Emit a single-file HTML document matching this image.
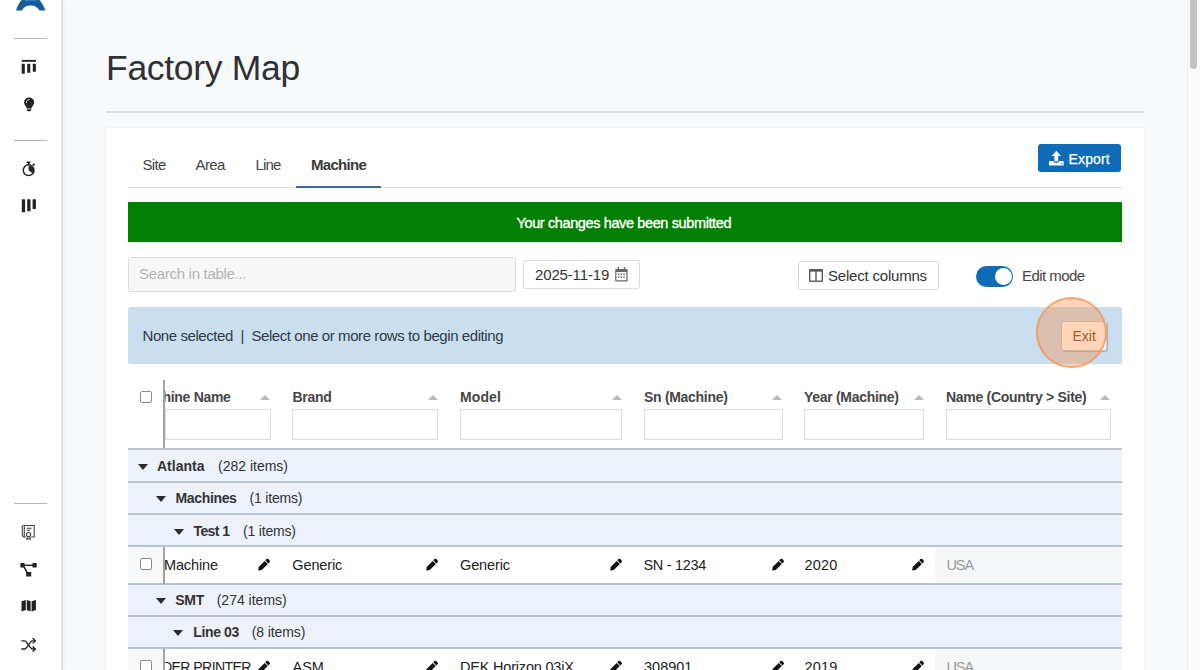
<!DOCTYPE html>
<html><head><meta charset="utf-8">
<style>
*{box-sizing:border-box;margin:0;padding:0}
html,body{width:1200px;height:670px;overflow:hidden;background:#f8f9fb;font-family:"Liberation Sans",sans-serif;color:#333;position:relative}
div{position:absolute}
.t{line-height:1;white-space:pre}
#side{left:0;top:0;width:63px;height:670px;background:#fff;border-right:2px solid #e3e3e4;box-shadow:2px 0 5px rgba(0,0,0,.035)}
.sdiv{left:14px;width:33px;height:1px;background:#b8b8b8}
svg{position:absolute;overflow:visible}
#scroll{left:1187px;top:0;width:13px;height:670px;background:#fafafa;border-left:1px solid #ededed}
#thumb{left:1190px;top:0;width:7px;height:69px;background:#c2c2c2;border-radius:0 0 4px 4px}
#hr{left:106px;top:110.5px;width:1038px;height:2.5px;background:#d9dadd}
#card{left:106px;top:128px;width:1038px;height:600px;background:#fff;border-radius:0;box-shadow:0 0 2px 1px rgba(0,0,0,.035)}
.tab{font-size:15px;color:#444;top:157px}
#tabline{left:128px;top:187px;width:994px;height:1px;background:#dee2e6}
#tabul{left:296px;top:186px;width:85px;height:2px;background:#3c6a9a}
#export{left:1038px;top:144px;width:83px;height:28px;background:#0d6cb5;border-radius:3px}
#green{left:128px;top:202px;width:994px;height:40px;background:#017f01}
#search{left:128px;top:257px;width:388px;height:35px;background:#f7f7f7;border:1px solid #dadada;border-radius:3px}
#date{left:523px;top:260px;width:117px;height:29px;background:#fff;border:1px solid #dadada;border-radius:3px}
#selcol{left:798px;top:261px;width:141px;height:29px;background:#fff;border:1px solid #dadada;border-radius:3px}
#toggle{left:976px;top:266px;width:37px;height:21px;background:#0d6cb5;border-radius:11px}
#knob{left:995px;top:268px;width:17px;height:17px;background:#fff;border-radius:50%}
#info{left:128px;top:307px;width:994px;height:57px;background:#c9dff0;border-radius:2px}
#exit{left:1061px;top:321px;width:46px;height:30px;background:#fff;border:1px solid #c8c8c8;border-radius:3px;box-shadow:1px 1px 1px rgba(0,0,0,.2)}
#circle{left:1036px;top:297px;width:71px;height:71px;border-radius:50%;background:rgba(255,130,45,.33);border:2.5px solid rgba(240,152,95,.8);box-shadow:0 0 1px rgba(240,150,90,.6)}
.hdr{font-size:14px;font-weight:bold;color:#464646;top:390px;letter-spacing:-0.3px}
.arr{width:0;height:0;border-left:5px solid transparent;border-right:5px solid transparent;border-bottom:5px solid #b9b9b9;top:395px}
.fin{top:409px;height:31px;background:#fff;border:1px solid #dcdcdc}
.rb{left:128px;width:994px;height:2px;background:#b7c5d2}
.grp{left:128px;width:994px;background:#edf1f9}
.tri{width:0;height:0;border-left:5px solid transparent;border-right:5px solid transparent;border-top:6px solid #2b2b2b}
.gn{font-size:14px;font-weight:bold;color:#333}
.gc{font-size:14px;color:#333}
.cell{font-size:14.5px;color:#222}
.cb{left:140px;width:12px;height:12px;border:1px solid #8a8a8a;border-radius:2px;background:#fff}
.vl{left:163px;width:2px;background:#a3a3a3}
</style></head><body>
<div id="side">
  <div class="sdiv" style="top:38px"></div>
  <div class="sdiv" style="top:140px"></div>
  <div class="sdiv" style="top:503px"></div>
</div>

<!-- logo -->
<svg style="left:0;top:0" width="62" height="20" viewBox="0 0 62 20"><path d="M16 10.5 L22 10.5 C24 6.5 27 5.5 30.5 5.5 C34 5.5 37 6.5 39.5 10.5 L45.5 10.5 C42 1 37 -4 30.5 -4 C24 -4 19 1 16 10.5 Z" fill="#175c98"/><path d="M24.5 -1.5 C27.5 -3.5 33.5 -3.5 36.5 -1.5 L35.5 1.8 C33 0.3 28 0.3 25.5 1.8Z" fill="#2687cf"/></svg>
<!-- icon1 -->
<svg style="left:0;top:0" width="62" height="670" viewBox="0 0 62 670">
<g fill="#222">
<rect x="21.7" y="59.9" width="14.2" height="1.9"/>
<rect x="21.7" y="63.8" width="3.1" height="10" rx="0.5"/>
<rect x="27.2" y="63.8" width="3.1" height="9" rx="0.5"/>
<rect x="32.8" y="63.8" width="3.1" height="7.9" rx="0.5"/>
<!-- bulb -->
<path d="M29.1 97.5 C26.2 97.5 24.1 99.7 24.1 102.4 C24.1 104.5 25.5 105.6 26.4 107.3 L26.6 108.6 L31.6 108.6 L31.8 107.3 C32.7 105.6 34.2 104.5 34.2 102.4 C34.2 99.7 32 97.5 29.1 97.5 Z"/>
<path d="M26.3 102.6 C26.3 100.8 27.6 99.6 29.2 99.5" fill="none" stroke="#fff" stroke-width="0.9" stroke-linecap="round"/>
<path d="M26.8 109.3 L31.4 109.3 L31.2 110.6 C30.6 111.5 27.6 111.5 27 110.6 Z"/>
<!-- stopwatch -->
<rect x="26.6" y="161.6" width="3.8" height="1.6" rx="0.3"/>
<rect x="27.8" y="162.6" width="1.5" height="2.4"/>
<circle cx="33.7" cy="164.6" r="1.2"/>
<path d="M28.6 164.1 A6.1 6.1 0 1 0 28.6 176.3 A6.1 6.1 0 1 0 28.6 164.1 Z M28.6 165.6 A4.6 4.6 0 1 1 28.6 174.8 A4.6 4.6 0 1 1 28.6 165.6 Z" fill-rule="evenodd"/>
<path d="M28.6 165.4 A4.8 4.8 0 0 1 32.38 173.16 L28.6 170.2 Z"/>
<!-- bars -->
<rect x="21.8" y="199.2" width="3.3" height="13.1" rx="0.5"/>
<rect x="27.2" y="199.2" width="3.3" height="12.1" rx="0.5"/>
<rect x="32.6" y="199.2" width="3.3" height="9.7" rx="0.5"/>
<!-- network -->
<rect x="20.4" y="563" width="4.2" height="4.6" rx="0.6"/>
<rect x="32.5" y="563" width="4.2" height="4.6" rx="0.6"/>
<rect x="26.2" y="571.9" width="5" height="4.7" rx="0.6"/>
<rect x="24" y="564.6" width="9" height="1.4"/>
<path d="M23 566.5 L24.3 565.8 L28 572.5 L26.7 573.2 Z"/>
<!-- map -->
<path d="M21.5 601.3 L25.8 599.9 L25.8 610.1 L21.5 611.4 Z M26.8 599.9 L30.6 601.3 L30.6 611.4 L26.8 610.1 Z M31.6 601.3 L35.9 599.9 L35.9 610.1 L31.6 611.4 Z"/>
</g>
<!-- certificate outline -->
<g fill="none" stroke="#444" stroke-width="1.1">
<path d="M23.5 525.5 L34.2 525.5 L34.2 537 L31.2 537"/>
<path d="M23.5 525.5 C22 525.5 22 527 22.3 528 L22.3 534 C22.3 536 23 537 24.5 537 L26 537"/>
<path d="M24.3 526 L24.3 536.8"/>
<path d="M26.8 528.3 L31.5 528.3 M26.8 530.3 L30 530.3"/>
<circle cx="28.6" cy="534.6" r="2.1"/>
<path d="M27.3 536.5 L26.9 539.3 L28.6 538.5 L30.3 539.3 L29.9 536.5"/>
</g>
<!-- shuffle -->
<g fill="none" stroke="#222" stroke-width="1.3" stroke-linecap="round" stroke-linejoin="round">
<path d="M21.8 640.8 L24.5 640.8 C27.5 640.8 29.5 649 32.5 649 L35.2 649"/>
<path d="M21.8 649 L24.5 649 C27.5 649 29.5 640.8 32.5 640.8 L35.2 640.8"/>
<path d="M33 638.5 L35.3 640.8 L33 643.1"/>
<path d="M33 646.7 L35.3 649 L33 651.3"/>
</g>
</svg>


<div class="t" style="left:106px;top:50.5px;font-size:35.5px;color:#2f3134;letter-spacing:-0.3px">Factory Map</div>
<div id="hr"></div>
<div id="card"></div>

<div class="t tab" style="left:142.5px;letter-spacing:-0.7px">Site</div>
<div class="t tab" style="left:195.5px;letter-spacing:-0.6px">Area</div>
<div class="t tab" style="left:255.5px;letter-spacing:-0.8px">Line</div>
<div class="t tab" style="left:311px;font-weight:bold;color:#3a3a3a;letter-spacing:-0.7px">Machine</div>
<div id="tabline"></div>
<div id="tabul"></div>

<div id="export"></div>
<div class="t" style="left:1068.5px;top:151.5px;font-size:14px;color:#fff;letter-spacing:0.15px;-webkit-text-stroke:0.25px #fff">Export</div>

<div id="green"></div>
<div class="t" style="left:516.5px;top:215.8px;font-size:14.5px;color:#fff;letter-spacing:-0.38px;-webkit-text-stroke:0.35px #fff">Your changes have been submitted</div>

<div id="search"></div>
<div class="t" style="left:139px;top:266px;font-size:15px;color:#b3b3b3;letter-spacing:-0.3px">Search in table...</div>
<div id="date"></div>
<div class="t" style="left:535px;top:267.3px;font-size:15px;color:#333;letter-spacing:-0.15px">2025-11-19</div>
<div id="selcol"></div>
<div class="t" style="left:828px;top:267.8px;font-size:15px;color:#333;letter-spacing:-0.2px">Select columns</div>
<div id="toggle"></div><div id="knob"></div>
<div class="t" style="left:1022px;top:267.8px;font-size:15px;color:#444;letter-spacing:-0.55px">Edit mode</div>

<div id="info"></div>
<div class="t" style="left:142.5px;top:327.5px;font-size:15px;color:#2f3a44;letter-spacing:-0.42px">None selected  |  Select one or more rows to begin editing</div>
<div id="exit"></div>
<div class="t" style="left:1072.5px;top:329px;font-size:14px;color:#6b4a33">Exit</div>
<div id="circle"></div>

<!-- table header -->
<div class="cb" style="top:391px"></div>
<div class="vl" style="top:380px;height:68px"></div>
<div style="left:165px;top:380px;width:95px;height:30px;overflow:hidden"><div class="t hdr" style="left:-2.5px;top:10px">hine Name</div></div>
<div class="arr" style="left:260px"></div>
<div class="fin" style="left:165px;width:106px"></div>
<div class="t hdr" style="left:292.5px">Brand</div>
<div class="arr" style="left:428px"></div>
<div class="fin" style="left:292px;width:146px"></div>
<div class="t hdr" style="left:460px;letter-spacing:0.1px">Model</div>
<div class="arr" style="left:612px"></div>
<div class="fin" style="left:460px;width:162px"></div>
<div class="t hdr" style="left:644px">Sn (Machine)</div>
<div class="arr" style="left:772px"></div>
<div class="fin" style="left:644px;width:139px"></div>
<div class="t hdr" style="left:804px">Year (Machine)</div>
<div class="arr" style="left:914px"></div>
<div class="fin" style="left:804px;width:120px"></div>
<div class="t hdr" style="left:946px">Name (Country &gt; Site)</div>
<div class="arr" style="left:1100px"></div>
<div class="fin" style="left:946px;width:165px"></div>

<!-- rows -->
<div class="grp" style="top:449px;height:33px"></div>
<div class="grp" style="top:482px;height:33px"></div>
<div class="grp" style="top:515px;height:32px"></div>
<div class="grp" style="top:584px;height:33px"></div>
<div class="grp" style="top:617px;height:32px"></div>
<div style="left:128px;top:547px;width:36px;height:37px;background:#f7f8f9"></div>
<div style="left:935px;top:547px;width:187px;height:37px;background:#f5f6f8"></div>
<div style="left:128px;top:649px;width:36px;height:30px;background:#f7f8f9"></div>
<div style="left:935px;top:649px;width:187px;height:30px;background:#f5f6f8"></div>
<div class="rb" style="top:448px"></div>
<div class="rb" style="top:481px"></div>
<div class="rb" style="top:513px"></div>
<div class="rb" style="top:545px"></div>
<div class="rb" style="top:583px"></div>
<div class="rb" style="top:615px"></div>
<div class="rb" style="top:647px"></div>

<div class="tri" style="left:137.5px;top:464px"></div>
<div class="t gn" style="left:157px;top:458.8px">Atlanta</div>
<div class="t gc" style="left:218px;top:458.8px">(282 items)</div>
<div class="tri" style="left:155.5px;top:496px"></div>
<div class="t gn" style="left:175.5px;top:491.3px;letter-spacing:-0.35px">Machines</div>
<div class="t gc" style="left:249.5px;top:491.3px;letter-spacing:-0.18px">(1 items)</div>
<div class="tri" style="left:173.5px;top:528.5px"></div>
<div class="t gn" style="left:193.5px;top:523.6px;letter-spacing:-0.6px">Test 1</div>
<div class="t gc" style="left:243px;top:523.6px;letter-spacing:-0.18px">(1 items)</div>
<div class="tri" style="left:155.5px;top:598px"></div>
<div class="t gn" style="left:175.3px;top:593.1px;letter-spacing:-0.3px">SMT</div>
<div class="t gc" style="left:216.7px;top:593.1px">(274 items)</div>
<div class="tri" style="left:173.3px;top:630px"></div>
<div class="t gn" style="left:193.3px;top:625.1px;letter-spacing:-0.38px">Line 03</div>
<div class="t gc" style="left:251.7px;top:625.1px;letter-spacing:-0.1px">(8 items)</div>

<div class="cb" style="top:558px"></div>
<div class="vl" style="top:547px;height:37px"></div>
<div class="t cell" style="left:164px;top:557.7px;letter-spacing:-0.14px">Machine</div>
<div class="t cell" style="left:292.3px;top:557.7px;letter-spacing:-0.13px">Generic</div>
<div class="t cell" style="left:460px;top:557.7px;letter-spacing:-0.13px">Generic</div>
<div class="t cell" style="left:643.5px;top:557.7px;letter-spacing:-0.3px">SN - 1234</div>
<div class="t cell" style="left:804.5px;top:557.7px;letter-spacing:0.2px">2020</div>
<div class="t cell" style="left:946.4px;top:557.7px;color:#9a9a9a;letter-spacing:-1px">USA</div>

<div class="cb" style="top:660px"></div>
<div class="vl" style="top:649px;height:30px"></div>
<div style="left:165px;top:649px;width:93px;height:30px;overflow:hidden"><div class="t cell" style="left:-3px;top:10.5px;letter-spacing:-0.6px;transform:scaleX(0.97);transform-origin:0 0">DER PRINTER</div></div>
<div class="t cell" style="left:292.5px;top:659.5px">ASM</div>
<div class="t cell" style="left:460px;top:659.5px;letter-spacing:-0.2px">DEK Horizon 03iX</div>
<div class="t cell" style="left:644px;top:659.5px">308901</div>
<div class="t cell" style="left:804.5px;top:659.5px;letter-spacing:0.2px">2019</div>
<div class="t cell" style="left:946.4px;top:659.5px;color:#9a9a9a;letter-spacing:-1px">USA</div>

<svg style="left:250.3px;top:552px" width="24" height="24" viewBox="0 0 24 24"><g fill="#111" transform="translate(8.2,18.5) rotate(-45)"><path d="M0 0 L2.8 -2.2 L11.4 -2.2 L11.4 2.2 L2.8 2.2 Z"/><path d="M12.2 -2.2 L13.9 -2.2 Q15.2 -2.2 15.2 -0.9 L15.2 0.9 Q15.2 2.2 13.9 2.2 L12.2 2.2 Z"/></g></svg>
<svg style="left:418.3px;top:552px" width="24" height="24" viewBox="0 0 24 24"><g fill="#111" transform="translate(8.2,18.5) rotate(-45)"><path d="M0 0 L2.8 -2.2 L11.4 -2.2 L11.4 2.2 L2.8 2.2 Z"/><path d="M12.2 -2.2 L13.9 -2.2 Q15.2 -2.2 15.2 -0.9 L15.2 0.9 Q15.2 2.2 13.9 2.2 L12.2 2.2 Z"/></g></svg>
<svg style="left:602.3px;top:552px" width="24" height="24" viewBox="0 0 24 24"><g fill="#111" transform="translate(8.2,18.5) rotate(-45)"><path d="M0 0 L2.8 -2.2 L11.4 -2.2 L11.4 2.2 L2.8 2.2 Z"/><path d="M12.2 -2.2 L13.9 -2.2 Q15.2 -2.2 15.2 -0.9 L15.2 0.9 Q15.2 2.2 13.9 2.2 L12.2 2.2 Z"/></g></svg>
<svg style="left:763.6px;top:552px" width="24" height="24" viewBox="0 0 24 24"><g fill="#111" transform="translate(8.2,18.5) rotate(-45)"><path d="M0 0 L2.8 -2.2 L11.4 -2.2 L11.4 2.2 L2.8 2.2 Z"/><path d="M12.2 -2.2 L13.9 -2.2 Q15.2 -2.2 15.2 -0.9 L15.2 0.9 Q15.2 2.2 13.9 2.2 L12.2 2.2 Z"/></g></svg>
<svg style="left:904.4px;top:552px" width="24" height="24" viewBox="0 0 24 24"><g fill="#111" transform="translate(8.2,18.5) rotate(-45)"><path d="M0 0 L2.8 -2.2 L11.4 -2.2 L11.4 2.2 L2.8 2.2 Z"/><path d="M12.2 -2.2 L13.9 -2.2 Q15.2 -2.2 15.2 -0.9 L15.2 0.9 Q15.2 2.2 13.9 2.2 L12.2 2.2 Z"/></g></svg>
<svg style="left:250.3px;top:654px" width="24" height="24" viewBox="0 0 24 24"><g fill="#111" transform="translate(8.2,18.5) rotate(-45)"><path d="M0 0 L2.8 -2.2 L11.4 -2.2 L11.4 2.2 L2.8 2.2 Z"/><path d="M12.2 -2.2 L13.9 -2.2 Q15.2 -2.2 15.2 -0.9 L15.2 0.9 Q15.2 2.2 13.9 2.2 L12.2 2.2 Z"/></g></svg>
<svg style="left:418.3px;top:654px" width="24" height="24" viewBox="0 0 24 24"><g fill="#111" transform="translate(8.2,18.5) rotate(-45)"><path d="M0 0 L2.8 -2.2 L11.4 -2.2 L11.4 2.2 L2.8 2.2 Z"/><path d="M12.2 -2.2 L13.9 -2.2 Q15.2 -2.2 15.2 -0.9 L15.2 0.9 Q15.2 2.2 13.9 2.2 L12.2 2.2 Z"/></g></svg>
<svg style="left:602.3px;top:654px" width="24" height="24" viewBox="0 0 24 24"><g fill="#111" transform="translate(8.2,18.5) rotate(-45)"><path d="M0 0 L2.8 -2.2 L11.4 -2.2 L11.4 2.2 L2.8 2.2 Z"/><path d="M12.2 -2.2 L13.9 -2.2 Q15.2 -2.2 15.2 -0.9 L15.2 0.9 Q15.2 2.2 13.9 2.2 L12.2 2.2 Z"/></g></svg>
<svg style="left:763.6px;top:654px" width="24" height="24" viewBox="0 0 24 24"><g fill="#111" transform="translate(8.2,18.5) rotate(-45)"><path d="M0 0 L2.8 -2.2 L11.4 -2.2 L11.4 2.2 L2.8 2.2 Z"/><path d="M12.2 -2.2 L13.9 -2.2 Q15.2 -2.2 15.2 -0.9 L15.2 0.9 Q15.2 2.2 13.9 2.2 L12.2 2.2 Z"/></g></svg>
<svg style="left:904.4px;top:654px" width="24" height="24" viewBox="0 0 24 24"><g fill="#111" transform="translate(8.2,18.5) rotate(-45)"><path d="M0 0 L2.8 -2.2 L11.4 -2.2 L11.4 2.2 L2.8 2.2 Z"/><path d="M12.2 -2.2 L13.9 -2.2 Q15.2 -2.2 15.2 -0.9 L15.2 0.9 Q15.2 2.2 13.9 2.2 L12.2 2.2 Z"/></g></svg>
<svg style="left:1048px;top:150px" width="16" height="16" viewBox="0 0 16 16"><g fill="#f4fbff"><path d="M8.4 0.8 L13 5.9 L10.2 5.9 L10.2 11.5 L6.4 11.5 L6.4 5.9 L3.7 5.9 Z"/><path d="M1 11 L5.3 11 C5.6 12.3 6.6 13 8.3 13 C10 13 11 12.3 11.3 11 L15.7 11 L15.7 15.5 L1 15.5 Z"/></g><g fill="#0d6cb5"><rect x="12.6" y="13.3" width="0.8" height="0.8"/><rect x="14" y="13.3" width="0.8" height="0.8"/></g></svg>
<svg style="left:809px;top:269px" width="14" height="13" viewBox="0 0 14 13"><g fill="none" stroke="#5a5a5a" stroke-width="1.4"><rect x="0.7" y="1.2" width="12.6" height="11"/><path d="M7 2 L7 12"/></g><rect x="0" y="0" width="14" height="2.7" fill="#5a5a5a"/></svg>
<svg style="left:615px;top:267px" width="13" height="15" viewBox="0 0 13 15"><g fill="#666"><rect x="2.6" y="0" width="1.4" height="2.6"/><rect x="8.8" y="0" width="1.4" height="2.6"/><path d="M1.2 2 L11.6 2 C12.2 2 12.6 2.4 12.6 3 L12.6 13.6 C12.6 14.2 12.2 14.6 11.6 14.6 L1.2 14.6 C0.6 14.6 0.2 14.2 0.2 13.6 L0.2 3 C0.2 2.4 0.6 2 1.2 2 Z M1.4 5 L1.4 13.3 L11.4 13.3 L11.4 5 Z" fill-rule="evenodd"/><rect x="2.9" y="6.5" width="1.5" height="1.5"/><rect x="5.6" y="6.5" width="1.5" height="1.5"/><rect x="8.3" y="6.5" width="1.5" height="1.5"/><rect x="2.9" y="9.3" width="1.5" height="1.5"/><rect x="5.6" y="9.3" width="1.5" height="1.5"/><rect x="8.3" y="9.3" width="1.5" height="1.5"/></g></svg>

<div id="scroll"></div><div id="thumb"></div>
</body></html>
